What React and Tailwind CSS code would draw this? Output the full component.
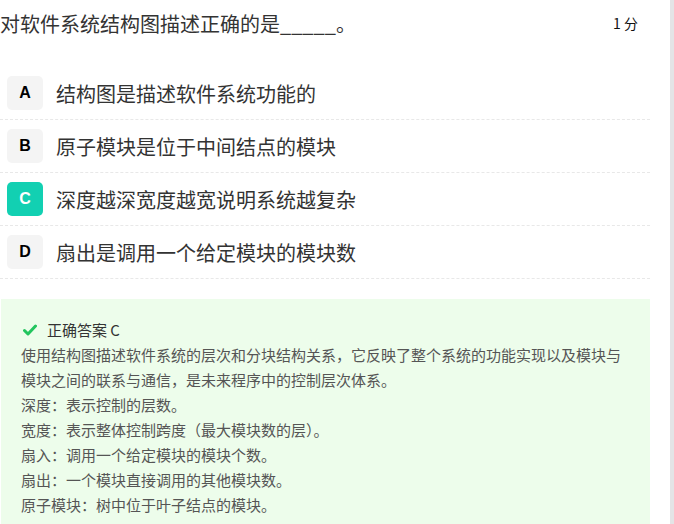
import React from "react";

const options = [
  { key: "A", text: "结构图是描述软件系统功能的" },
  { key: "B", text: "原子模块是位于中间结点的模块" },
  { key: "C", text: "深度越深宽度越宽说明系统越复杂", active: true },
  { key: "D", text: "扇出是调用一个给定模块的模块数" },
];

const lines = [
  "使用结构图描述软件系统的层次和分块结构关系，它反映了整个系统的功能实现以及模块与",
  "模块之间的联系与通信，是未来程序中的控制层次体系。",
  "深度：表示控制的层数。",
  "宽度：表示整体控制跨度（最大模块数的层）。",
  "扇入：调用一个给定模块的模块个数。",
  "扇出：一个模块直接调用的其他模块数。",
  "原子模块：树中位于叶子结点的模块。",
];

const cjk = { fontFamily: '"Microsoft YaHei", "Noto Sans CJK SC", sans-serif' };

export default function App() {
  return (
    <div className="flex h-[524px] w-[674px] overflow-hidden bg-white" style={cjk}>
      <div className="flex w-[670px] flex-col">
        <div className="flex h-[67px] w-[650px] items-start justify-between">
          <div className="mt-[10px] text-[20px] leading-[28px] text-[#333]">
            对软件系统结构图描述正确的是_____。
          </div>
          <div className="mr-[12px] mt-[12px] text-[14px] leading-[22px] text-[#111]">1 分</div>
        </div>
        <div className="flex w-[650px] flex-col">
          {options.map((o) => (
            <div
              key={o.key}
              className="flex h-[53px] items-center border-b border-dashed border-[#e8e8e8] pl-[7px]"
            >
              <div
                className={
                  "flex h-[34px] w-[36px] items-center justify-center rounded-[5px] text-[16px] font-bold " +
                  (o.active ? "bg-[#12d0b2] text-white" : "bg-[#f4f4f4] text-black")
                }
                style={{ fontFamily: '"Liberation Sans", Arial, sans-serif' }}
              >
                {o.key}
              </div>
              <div className="ml-[13px] mt-[1px] text-[20px] leading-[28px] text-[#333]">{o.text}</div>
            </div>
          ))}
        </div>
        <div className="mt-[20px] ml-[1px] w-[649px] flex-1 bg-[#edfdeb] pl-[20px] pt-[18px]">
          <div className="flex items-center text-[15px] leading-[25px] text-[#333]">
            <svg width="14" height="12" viewBox="0 0 14 12" className="ml-[2px] mr-[10px]">
              <path d="M1.5 6.5 L5 10 L12.5 2" fill="none" stroke="#22c55e" strokeWidth="3" strokeLinecap="round" strokeLinejoin="round" />
            </svg>
            正确答案 C
          </div>
          {lines.map((l, i) => (
            <div key={i} className="text-[15px] leading-[25px] text-[#555]">
              {l}
            </div>
          ))}
        </div>
      </div>
      <div className="h-full w-[4px] bg-[#e4e4e6]" />
    </div>
  );
}
